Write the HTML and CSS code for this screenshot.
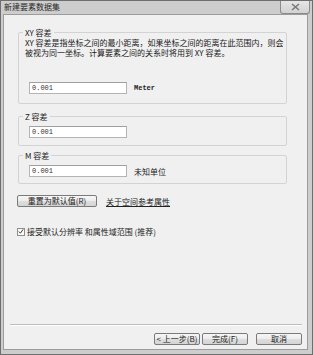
FILE: index.html
```html
<!DOCTYPE html>
<html lang="zh-CN">
<head>
    <meta charset="UTF-8">
    <title>新建要素数据集</title>
    <link rel="stylesheet" href="styles.css">
</head>
<body>
    <div class="window">
        <div class="titlebar">
            <span class="title">新建要素数据集</span>
            <span class="close" aria-label="关闭">
                <svg width="9" height="8" viewBox="0 0 9 8">
                    <path d="M1 1 L8 7 M8 1 L1 7" stroke="#7a7a7a" stroke-width="1.6" fill="none"/>
                </svg>
            </span>
        </div>

        <div class="client">
            <div class="body">
                <fieldset class="group group-xy">
                    <legend>XY 容差</legend>
                    <p class="desc">XY 容差是指坐标之间的最小距离，如果坐标之间的距离在此范围内，则会<br>被视为同一坐标。计算要素之间的关系时将用到 XY 容差。</p>
                    <div class="field field-xy">
                        <input class="value" type="text" value="0.001">
                        <span class="unit unit-en">Meter</span>
                    </div>
                </fieldset>

                <fieldset class="group group-z">
                    <legend>Z 容差</legend>
                    <div class="field">
                        <input class="value" type="text" value="0.001">
                    </div>
                </fieldset>

                <fieldset class="group group-m">
                    <legend>M 容差</legend>
                    <div class="field">
                        <input class="value" type="text" value="0.001">
                        <span class="unit">未知单位</span>
                    </div>
                </fieldset>

                <div class="actions">
                    <button class="btn btn-reset">重置为默认值(R)</button>
                    <a class="link" href="#">关于空间参考属性</a>
                </div>

                <label class="check">
                    <span class="box">
                        <svg width="7" height="7" viewBox="0 0 7 7">
                            <path d="M1 3.5 L2.8 5.5 L6 1" stroke="#333" stroke-width="1.1" fill="none"/>
                        </svg>
                    </span>
                    接受默认分辨率 和属性域范围 (推荐)
                </label>
            </div>

            <div class="footer">
                <div class="sep"></div>
                <div class="nav">
                    <button class="btn btn-nav">&lt; 上一步(B)</button>
                    <button class="btn btn-nav">完成(F)</button>
                    <button class="btn btn-nav btn-cancel">取消</button>
                </div>
            </div>
        </div>
    </div>
</body>
</html>
```

FILE: styles.css
```css
* {
    box-sizing: border-box;
}

body {
    margin: 0;
    background: #dcdcdc;
    font-family: "Noto Sans CJK SC", "Liberation Sans", sans-serif;
    font-size: 8px;
    color: #1e1e1e;
}

.window {
    width: 313px;
    height: 355px;
    display: flex;
    flex-direction: column;
    border: 1px solid #6e6e6e;
    padding: 0 4px 4px 2px;
    background: #cdcdcd;
}

.titlebar {
    height: 13px;
    display: flex;
    align-items: flex-start;
    justify-content: space-between;
}

.title {
    line-height: 12px;
    padding-left: 1px;
    color: #2a2a2a;
}

.close {
    width: 30px;
    height: 13px;
    margin-right: -2px;
    display: flex;
    align-items: center;
    justify-content: center;
    border: 1px solid #8c8c8c;
    border-top: none;
    border-radius: 0 0 3px 3px;
    background: linear-gradient(#e6e6e6, #d2d2d2);
}

.client {
    flex: 1;
    display: flex;
    flex-direction: column;
    border: 1px solid #9c9c9c;
    background: #f0f0f0;
}

.body {
    flex: 1;
    padding: 13px 20px 0 14px;
}

/* group boxes */
.group {
    margin: 0;
    min-width: 0;
    border: 1px solid #d3d3d3;
    border-radius: 2px;
    padding: 0 2px 9px 6px;
}

.group legend {
    padding: 0 2px;
    margin-left: -2px;
    line-height: 9px;
    color: #222;
}

.group-z {
    margin-top: 8px;
    padding-bottom: 7px;
}

.group-m {
    margin-top: 5px;
    padding-bottom: 6px;
}

.desc {
    margin: 1px 0 0 0;
    line-height: 10px;
    white-space: nowrap;
    color: #1a1a1a;
}

.field {
    display: flex;
    align-items: center;
    gap: 7px;
    margin: 5px 0 0 4px;
}

.field-xy {
    margin-top: 24px;
}

.value {
    width: 98px;
    height: 12px;
    margin: 0;
    padding: 0 2px;
    border: 1px solid #b4b4b4;
    border-top-color: #a0a0a0;
    background: #fff;
    font-family: "Liberation Mono", monospace;
    font-size: 7px;
    color: #333;
    outline: none;
}

.unit {
    color: #222;
}

.unit-en {
    font-family: "Liberation Mono", monospace;
    font-size: 7px;
    font-weight: bold;
}

/* buttons */
.btn {
    margin: 0;
    padding: 0;
    height: 12px;
    border: 1px solid #7a7a7a;
    border-radius: 2px;
    background: linear-gradient(#f6f6f6, #ececec 50%, #dedede 50%, #d4d4d4);
    font-family: "Noto Sans CJK SC", "Liberation Sans", sans-serif;
    font-size: 8px;
    line-height: 10px;
    color: #222;
}

.actions {
    display: flex;
    align-items: center;
    gap: 9px;
    margin-top: 11px;
    margin-left: -1px;
}

.btn-reset {
    width: 80px;
}

.link {
    color: #222;
    text-decoration: underline;
}

.check {
    display: flex;
    align-items: center;
    gap: 2px;
    margin-top: 20px;
    margin-left: -1px;
    line-height: 9px;
}

.box {
    width: 8px;
    height: 8px;
    display: flex;
    align-items: center;
    justify-content: center;
    border: 1px solid #8e8e8e;
    background: #fafafa;
}

/* footer */
.footer {
    padding: 0 5px 4px 6px;
}

.sep {
    height: 2px;
    border-top: 1px solid #bdbdbd;
    border-bottom: 1px solid #fff;
}

.nav {
    display: flex;
    justify-content: flex-end;
    gap: 2px;
    margin-top: 7px;
}

.btn-nav {
    width: 46px;
}

.btn-cancel {
    margin-left: 6px;
}
```
